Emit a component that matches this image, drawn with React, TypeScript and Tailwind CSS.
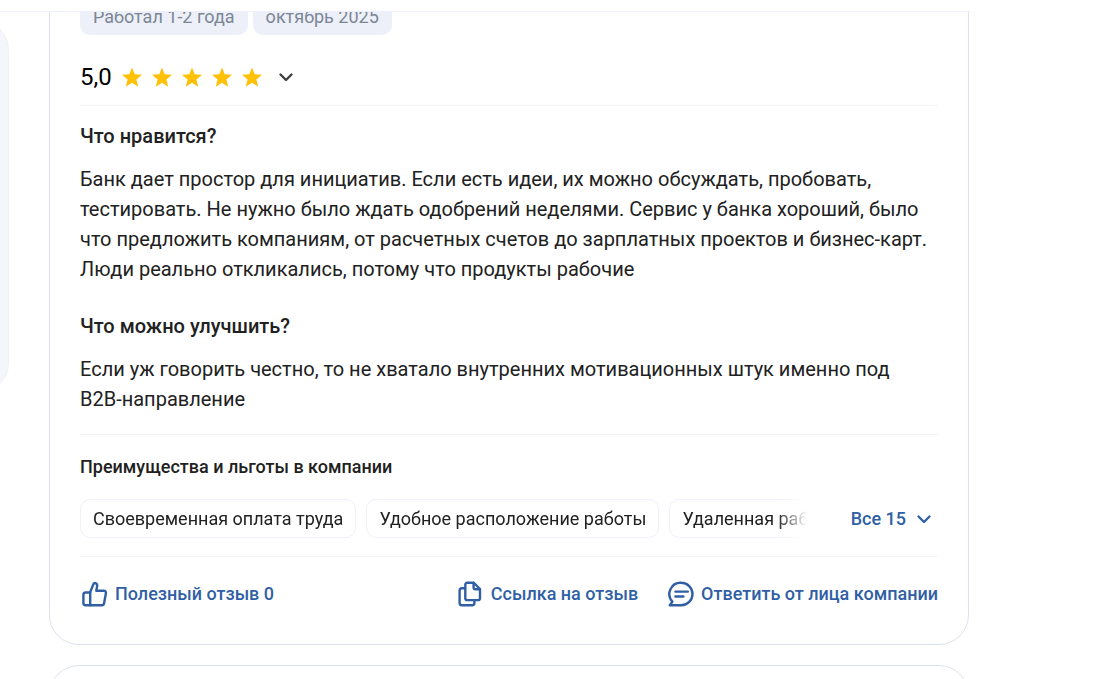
import React from "react";

const tags = ["Работал 1-2 года", "октябрь 2025"];

const benefits = [
  "Своевременная оплата труда",
  "Удобное расположение работы",
  "Удаленная работа",
];

const answers = [
  {
    title: "Что нравится?",
    text: "Банк дает простор для инициатив. Если есть идеи, их можно обсуждать, пробовать, тестировать. Не нужно было ждать одобрений неделями. Сервис у банка хороший, было что предложить компаниям, от расчетных счетов до зарплатных проектов и бизнес-карт. Люди реально откликались, потому что продукты рабочие",
  },
  {
    title: "Что можно улучшить?",
    text: (
      <>
        Если уж говорить честно, то не хватало внутренних мотивационных штук именно под{" "}
        <span className="whitespace-nowrap">B2B-направление</span>
      </>
    ),
  },
];

function Star() {
  return (
    <svg className="size-5" viewBox="0 0 20 20" fill="#ffc107" aria-hidden="true">
      <path d="M10 .6l2.700 6.600 7.300.5-5.600 4.700 1.800 7.300-6.200-3.900-6.200 3.900 1.800-7.300L0 7.700l7.300-.5z" />
    </svg>
  );
}

function Chevron() {
  return (
    <svg
      className="size-4"
      viewBox="0 0 16 16"
      fill="none"
      stroke="currentColor"
      strokeWidth="2.4"
      strokeLinecap="round"
      strokeLinejoin="round"
      aria-hidden="true"
    >
      <path d="M2.5 5.5L8 11l5.5-5.5" />
    </svg>
  );
}

function ActionIcon({ children }: { children: React.ReactNode }) {
  return (
    <svg
      className="size-7 shrink-0"
      viewBox="0 0 28 28"
      fill="none"
      stroke="currentColor"
      strokeWidth="2.4"
      strokeLinecap="round"
      strokeLinejoin="round"
      aria-hidden="true"
    >
      {children}
    </svg>
  );
}

function ThumbIcon() {
  return (
    <ActionIcon>
      <path d="M10 12.5L13.500 4c.4-.9 1.200-1.200 2-.9 1.300.5 1.900 1.800 1.600 3.200L16.300 10.800h7.600c1.400 0 2.300 1.100 2 2.500l-1.800 10c-.2 1.200-1 1.900-2.200 1.900H5.600c-1.300 0-2.200-.9-2.200-2.200v-8c0-1.500.9-2.500 2.300-2.500z" />
      <path d="M10.200 12.500v12.700" />
    </ActionIcon>
  );
}

function CopyIcon() {
  return (
    <ActionIcon>
      <path d="M11.200 2.800h6.600l6.200 6.200v9.200c0 1.100-.8 1.900-1.900 1.900H11.200c-1.100 0-1.900-.8-1.900-1.900V4.700c0-1.100.8-1.900 1.900-1.900z" />
      <path d="M17.600 3v4.500c0 1.100.6 1.700 1.700 1.700h4.500" />
      <path d="M9 8.300H5.800c-1.300 0-2.200.9-2.200 2.200V23c0 1.300.9 2.200 2.200 2.200h10.400c1.300 0 2.200-.9 2.200-2.200v-2.800" />
    </ActionIcon>
  );
}

function CommentIcon() {
  return (
    <ActionIcon>
      <path d="M15.300 2.800a11.200 11.200 0 1 1 0 22.400H3.800l2.600-3.600A11.200 11.200 0 0 1 15.300 2.800z" />
      <path d="M9.400 11.600h12.500M9.400 16.500h8" />
    </ActionIcon>
  );
}

function Review() {
  return (
    <article className="-mt-12 rounded-[30px] border border-[#dde2ec] px-[30px] pt-8 pb-9">
      <ul className="flex gap-[5px]">
        {tags.map((tag) => (
          <li
            key={tag}
            className="rounded-[10px] bg-[#edf0f9] px-[13px] pt-2 pb-[6px] text-lg leading-6 text-[#7b8794]"
          >
            {tag}
          </li>
        ))}
      </ul>

      <div className="mt-[30px] flex items-center border-b border-[#f3f3fa] pb-4">
        <span className="text-2xl leading-6 text-black">5,0</span>
        <span className="ml-[10px] flex gap-[10px]" role="img" aria-label="5 из 5">
          {[1, 2, 3, 4, 5].map((n) => (
            <Star key={n} />
          ))}
        </span>
        <button type="button" className="ml-4 text-[#404040]" aria-label="Показать оценки">
          <Chevron />
        </button>
      </div>

      <div className="flex flex-col gap-[27px] border-b border-[#f3f3fa] pt-[15px] pb-5 text-xl leading-[30px]">
        {answers.map((answer) => (
          <section key={answer.title} className="flex flex-col gap-[13px]">
            <h3 className="font-medium">{answer.title}</h3>
            <p>{answer.text}</p>
          </section>
        ))}
      </div>

      <section className="border-b border-[#f3f3fa] pt-5 pb-[18px]">
        <h4 className="text-lg leading-6 font-medium">Преимущества и льготы в компании</h4>
        <div className="mt-5 flex items-center">
          <ul className="flex min-w-0 flex-1 gap-[10px] overflow-hidden mask-r-from-[calc(100%-30px)] mask-r-to-100%">
            {benefits.map((benefit) => (
              <li
                key={benefit}
                className="shrink-0 rounded-[10px] border border-[#f0f0f8] px-3 py-[7px] text-lg leading-[23px]"
              >
                {benefit}
              </li>
            ))}
          </ul>
          <button
            type="button"
            className="ml-11 flex items-center gap-[10px] pr-[6px] text-lg leading-6 font-medium text-[#315fa5]"
          >
            Все 15
            <Chevron />
          </button>
        </div>
      </section>

      <footer className="flex items-center gap-7 pt-[23px] text-lg leading-7 font-medium text-[#315fa5]">
        <button type="button" className="mr-auto flex items-center gap-[7px]">
          <ThumbIcon />
          Полезный отзыв 0
        </button>
        <button type="button" className="flex items-center gap-[7px]">
          <CopyIcon />
          Ссылка на отзыв
        </button>
        <button type="button" className="flex items-center gap-[7px]">
          <CommentIcon />
          Ответить от лица компании
        </button>
      </footer>
    </article>
  );
}

export default function App() {
  return (
    <div className="flex h-screen flex-col overflow-hidden bg-white font-['Roboto',sans-serif] text-[#212121]">
      <header className="h-3 w-full max-w-[970px] shrink-0 border-b border-[#edf0f9]" />
      <div className="flex min-h-0 flex-1 items-start gap-10 overflow-hidden">
        <aside className="mt-2 flex w-[9px] shrink-0 justify-end overflow-hidden">
          <div className="h-[373px] w-72 shrink-0 rounded-[30px] border border-[#eff0f7] bg-[#f5f6fc]" />
        </aside>
        <main className="flex w-full max-w-[920px] flex-col gap-5">
          <Review />
          <article className="h-72 rounded-[30px] border border-[#dde2ec]" />
        </main>
      </div>
    </div>
  );
}
